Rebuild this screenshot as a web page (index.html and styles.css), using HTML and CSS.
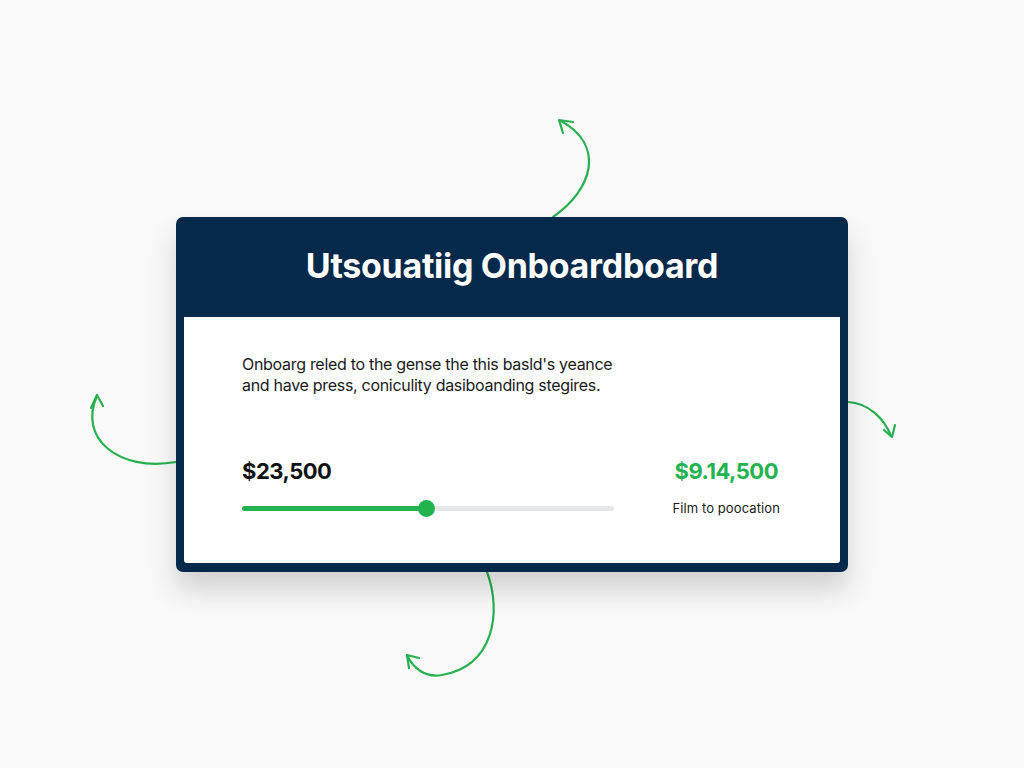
FILE: index.html
```html
<!DOCTYPE html>
<html>
<head>
<meta charset="utf-8">
<link rel="stylesheet" href="styles.css">
</head>
<body>
<div class="stage">
  <svg class="arrows" width="1024" height="768" viewBox="0 0 1024 768">
    <g fill="none" stroke="#27b04f" stroke-width="2.2" stroke-linecap="round" stroke-linejoin="round">
      <path d="M553 217 C 592 190, 606 146, 561 121"/>
      <path d="M559 120 L573 122 M559 120 L563 133"/>
      <path d="M176 462 C 118 472, 78 438, 97 396"/>
      <path d="M97 395 L91 408 M97 395 L103 406"/>
      <path d="M848 402 C 868 403, 884 418, 891 436"/>
      <path d="M892 437 L884 430 M892 437 L895 425"/>
      <path d="M487 572 C 502 612, 494 666, 442 675 C 425 678, 413 668, 407 655"/>
      <path d="M407 655 L419 658 M407 655 L409 668"/>
    </g>
  </svg>
  <div class="card">
    <div class="card-head">
      <h1 class="title">Utsouatiig Onboardboard</h1>
    </div>
    <div class="card-body">
      <p class="desc">Onboarg reled to the gense the this basld's yeance<br>and have press, coniculity dasiboanding stegires.</p>
      <div class="stats">
        <div class="left">
          <div class="amount">$23,500</div>
          <div class="slider">
            <div class="fill" style="width:184px"></div>
            <div class="knob" style="left:184px"></div>
          </div>
        </div>
        <div class="right">
          <div class="amount green">$9.14,500</div>
          <div class="caption">Film to poocation</div>
        </div>
      </div>
    </div>
  </div>
</div>
</body>
</html>
```
FILE: styles.css
```css
html, body {
  margin: 0;
  padding: 0;
}
body {
  background: #f9f9f9;
  font-family: Inter, "Liberation Sans", sans-serif;
}
.stage {
  position: relative;
  width: 1024px;
  height: 768px;
  overflow: hidden;
  display: flex;
  justify-content: center;
  padding-top: 217px;
  box-sizing: border-box;
}
.arrows {
  position: absolute;
  left: 0;
  top: 0;
  z-index: 0;
}
.card {
  position: relative;
  z-index: 1;
  width: 672px;
  height: 355px;
  background: #05294a;
  border-radius: 7px;
  padding: 0 8px 9px 8px;
  box-sizing: border-box;
  display: flex;
  flex-direction: column;
  box-shadow: 0 18px 28px rgba(0, 0, 0, 0.16);
}
.card-head {
  height: 100px;
  display: flex;
  align-items: center;
  justify-content: center;
}
.title {
  margin: 0 0 4px 0;
  color: #fff;
  font-size: 34px;
  font-weight: 700;
  letter-spacing: -0.3px;
}
.card-body {
  flex: 1;
  background: #fff;
  border-radius: 0 0 3px 3px;
  padding: 37px 60px 0 58px;
}
.desc {
  margin: 0;
  font-size: 16px;
  line-height: 21px;
  color: #1a1a1a;
  letter-spacing: -0.3px;
}
.stats {
  display: flex;
  justify-content: space-between;
  margin-top: 62px;
}
.left {
  width: 372px;
}
.amount {
  font-size: 22px;
  font-weight: 700;
  color: #111;
  line-height: 26px;
  letter-spacing: -0.5px;
}
.green {
  color: #22b34f;
  text-align: right;
  margin-right: 2px;
}
.slider {
  position: relative;
  margin-top: 22px;
  height: 5px;
  background: #e4e6e8;
  border-radius: 3px;
}
.fill {
  height: 5px;
  background: #22b34f;
  border-radius: 3px;
}
.knob {
  position: absolute;
  top: -6px;
  width: 17px;
  height: 17px;
  margin-left: -8px;
  border-radius: 50%;
  background: #22b34f;
}
.right {
  display: flex;
  flex-direction: column;
  align-items: flex-end;
}
.caption {
  margin-top: 16px;
  font-size: 13px;
  color: #1a1a1a;
  letter-spacing: 0.1px;
}
```
